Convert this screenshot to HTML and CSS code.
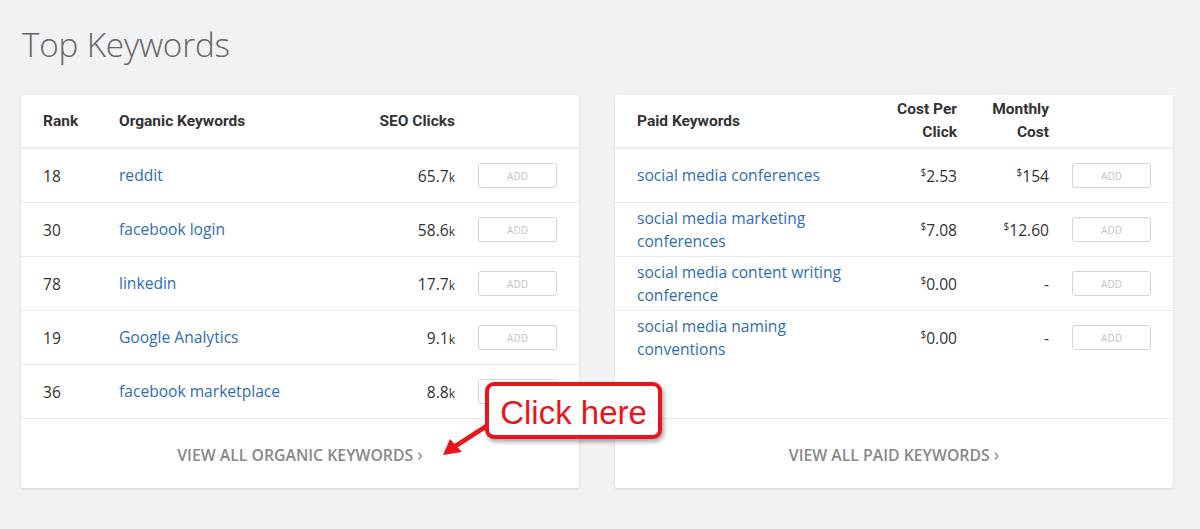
FILE: index.html
```html
<!DOCTYPE html>
<html>
<head>
<meta charset="utf-8">
<link rel="stylesheet" href="styles.css">
</head>
<body>
<div class="page">
  <h1 class="title">Top Keywords</h1>
  <div class="cards">
    <div class="card">
      <div class="table organic">
        <div class="row head">
          <div class="c">Rank</div>
          <div class="c">Organic Keywords</div>
          <div class="c num">SEO Clicks</div>
          <div class="c"></div>
        </div>
        <div class="row">
          <div class="c">18</div>
          <div class="c"><a class="kw">reddit</a></div>
          <div class="c num">65.7<span class="k">k</span></div>
          <div class="c"><span class="add">ADD</span></div>
        </div>
        <div class="row">
          <div class="c">30</div>
          <div class="c"><a class="kw">facebook login</a></div>
          <div class="c num">58.6<span class="k">k</span></div>
          <div class="c"><span class="add">ADD</span></div>
        </div>
        <div class="row">
          <div class="c">78</div>
          <div class="c"><a class="kw">linkedin</a></div>
          <div class="c num">17.7<span class="k">k</span></div>
          <div class="c"><span class="add">ADD</span></div>
        </div>
        <div class="row">
          <div class="c">19</div>
          <div class="c"><a class="kw">Google Analytics</a></div>
          <div class="c num">9.1<span class="k">k</span></div>
          <div class="c"><span class="add">ADD</span></div>
        </div>
        <div class="row">
          <div class="c">36</div>
          <div class="c"><a class="kw">facebook marketplace</a></div>
          <div class="c num">8.8<span class="k">k</span></div>
          <div class="c"><span class="add">ADD</span></div>
        </div>
      </div>
      <div class="foot"><span class="more">VIEW ALL ORGANIC KEYWORDS <span class="chev">›</span></span></div>
    </div>

    <div class="card">
      <div class="table paid">
        <div class="row head">
          <div class="c">Paid Keywords</div>
          <div class="c num">Cost Per<br>Click</div>
          <div class="c num">Monthly<br>Cost</div>
          <div class="c"></div>
        </div>
        <div class="row">
          <div class="c"><a class="kw">social media conferences</a></div>
          <div class="c num"><sup>$</sup>2.53</div>
          <div class="c num"><sup>$</sup>154</div>
          <div class="c"><span class="add">ADD</span></div>
        </div>
        <div class="row">
          <div class="c"><a class="kw">social media marketing conferences</a></div>
          <div class="c num"><sup>$</sup>7.08</div>
          <div class="c num"><sup>$</sup>12.60</div>
          <div class="c"><span class="add">ADD</span></div>
        </div>
        <div class="row">
          <div class="c"><a class="kw">social media content writing conference</a></div>
          <div class="c num"><sup>$</sup>0.00</div>
          <div class="c num">-</div>
          <div class="c"><span class="add">ADD</span></div>
        </div>
        <div class="row">
          <div class="c"><a class="kw">social media naming conventions</a></div>
          <div class="c num"><sup>$</sup>0.00</div>
          <div class="c num">-</div>
          <div class="c"><span class="add">ADD</span></div>
        </div>
      </div>
      <div class="foot"><span class="more">VIEW ALL PAID KEYWORDS <span class="chev">›</span></span></div>
    </div>
  </div>

  <svg class="arrow" width="60" height="50" viewBox="0 0 60 50">
    <line x1="56" y1="6" x2="14" y2="33" stroke="#e8161c" stroke-width="4.5" stroke-linecap="round"/>
    <polygon points="3,41 10,25 22,38" fill="#e8161c"/>
  </svg>
  <div class="callout">Click here</div>
</div>
</body>
</html>
```

FILE: styles.css
```css
html, body {
  margin: 0;
  padding: 0;
  background: #f1f2f4;
}
.page {
  position: relative;
  padding: 22px 27px 0 21px;
  height: 529px;
  box-sizing: border-box;
  font-family: "Open Sans", "Liberation Sans", sans-serif;
  color: #333;
}
.title {
  margin: 0 0 0 1px;
  font-weight: 300;
  font-size: 33.3px;
  line-height: 44px;
  color: #666;
  letter-spacing: -0.2px;
}
.cards {
  display: flex;
  gap: 36px;
  margin-top: 29px;
  align-items: stretch;
}
.card {
  width: 558px;
  height: 393px;
  background: #fff;
  border-radius: 3px;
  box-shadow: 0 1px 3px rgba(0, 0, 0, 0.12);
  display: flex;
  flex-direction: column;
}
.table {
  flex: 1;
  display: flex;
  flex-direction: column;
}
.row {
  display: grid;
  align-items: center;
  padding: 0 22px;
  height: 53px;
  border-bottom: 1px solid #e8e8e8;
  font-size: 15.6px;
}
.row:last-child {
  border-bottom: 0;
}
.organic .row {
  grid-template-columns: 76px 226px 110px 79px;
}
.organic .row > .c:nth-child(4),
.paid .row > .c:nth-child(4) {
  margin-left: 23px;
}
.paid .row {
  grid-template-columns: 220px 100px 92px 79px;
}
.row.head {
  height: 52px;
  border-bottom: 2px solid #eeeeee;
  font-family: Roboto, "Liberation Sans", sans-serif;
  font-weight: 700;
  font-size: 15.5px;
  line-height: 23px;
  color: #333;
}
.num {
  text-align: right;
}
.kw {
  color: #2e6db4;
  display: block;
  line-height: 23px;
  text-decoration: none;
}
.paid .kw {
  width: 215px;
}
.k {
  font-size: 12px;
}
sup {
  font-size: 10px;
  vertical-align: 6px;
  line-height: 0;
}
.add {
  display: flex;
  align-items: center;
  justify-content: center;
  width: 79px;
  height: 25px;
  box-sizing: border-box;
  border: 1px solid #d4d4d4;
  border-radius: 3px;
  font-size: 10px;
  color: #c4c4c4;
}
.foot {
  height: 69px;
  border-top: 1px solid #e8e8e8;
  display: flex;
  align-items: center;
  justify-content: center;
}
.more {
  font-size: 15.8px;
  font-weight: 600;
  color: #888;
  letter-spacing: 0;
}
.chev {
  font-size: 18px;
  font-weight: 400;
}
.callout {
  position: absolute;
  left: 485px;
  top: 382px;
  width: 177px;
  height: 57px;
  box-sizing: border-box;
  padding-top: 5px;
  border: 4px solid #e8161c;
  border-radius: 9px;
  background: #fff;
  box-shadow: 2px 3px 4px rgba(0, 0, 0, 0.35);
  display: flex;
  align-items: center;
  justify-content: center;
  font-family: "Liberation Sans", Arial, sans-serif;
  font-size: 33px;
  color: #e8161c;
}
.arrow {
  position: absolute;
  left: 440px;
  top: 414px;
}
```
